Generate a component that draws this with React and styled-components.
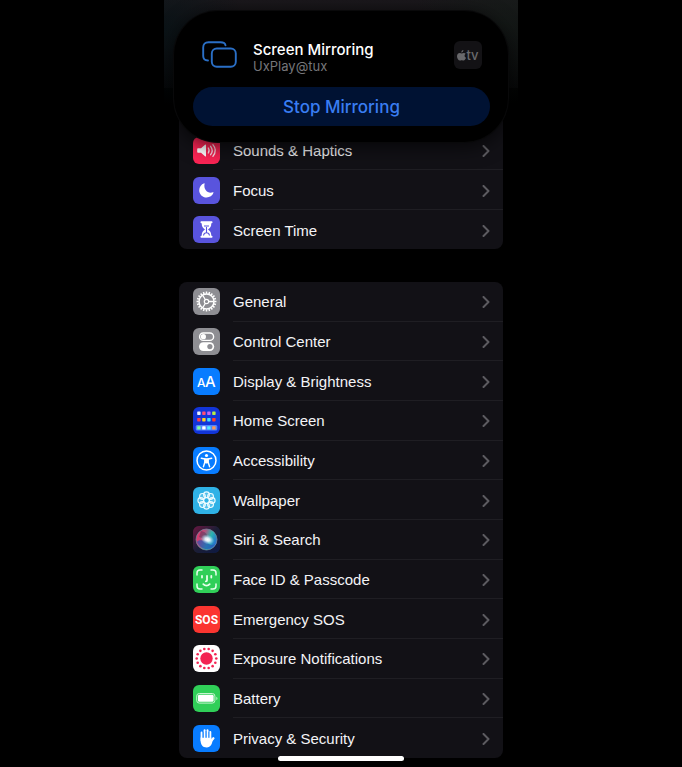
import React from "react";
import styled, { createGlobalStyle } from "styled-components";

const GlobalStyle = createGlobalStyle`
  * { box-sizing: border-box; }
  body {
    margin: 0;
    background: #000;
    color: #f4f4f6;
    font-family: Inter, "Liberation Sans", sans-serif;
  }
`;

const Phone = styled.main`
  position: relative;
  display: flex;
  flex-direction: column;
  gap: 33px;
  width: 100%;
  max-width: 354px;
  min-height: 100vh;
  margin: 0 auto;
  padding: 103px 15px 9px;
  background:
    radial-gradient(circle at 0 30px, rgba(8, 20, 24, 0.7), transparent 80px),
    radial-gradient(circle at 340px 20px, rgba(20, 28, 23, 0.6), transparent 90px),
    linear-gradient(#1b181c, #111013 30px, #050506 88px, #000 88px);
`;

const Group = styled.ul`
  display: grid;
  grid-auto-rows: ${(p) => (p.$fill ? "minmax(39px, 1fr)" : "auto")};
  flex: ${(p) => (p.$fill ? "1" : "none")};
  margin: 0;
  padding: ${(p) => (p.$tucked ? "27px 0 0" : "0")};
  list-style: none;
  background: #121116;
  border-radius: 8px;
  overflow: hidden;
`;

const Item = styled.li`
  display: grid;
  min-height: ${(p) => (p.$tall ? "40px" : "39px")};

  &:last-child { min-height: 39px; }
`;

const RowLink = styled.a`
  display: flex;
  align-items: stretch;
  gap: 13px;
  padding-left: 14px;
  color: inherit;
  text-decoration: none;
`;

const Tile = styled.span`
  align-self: center;
  flex: none;
  width: 27px;
  height: 27px;
  border-radius: 6px;
  overflow: hidden;
  background: ${(p) => p.$color};

  svg { display: block; }
`;

const RowBody = styled.span`
  display: flex;
  flex: 1;
  align-items: center;
  justify-content: space-between;
  padding-top: 2px;
  padding-right: 13px;
  font-family: "Liberation Sans", Arial, sans-serif;
  font-size: 15px;
  line-height: 20px;
  border-bottom: ${(p) => (p.$last ? "none" : "1px solid #1f1e23")};
`;

const Sheet = styled.section`
  position: absolute;
  top: 11px;
  left: 10px;
  right: 10px;
  padding: 25px 18px 16px 19px;
  background: #000;
  border-radius: 44px;
  box-shadow: 0 0 0 1px #09090a, 0 4px 20px rgba(0, 0, 0, 0.7);
`;

const SheetHeader = styled.header`
  display: flex;
  align-items: center;
  height: 38px;
  padding: 0 8px 0 9px;
  margin-bottom: 13px;
`;

const SheetTitles = styled.div`
  flex: 1;
  margin-left: 16px;
  padding-top: 5px;
`;

const Title = styled.h1`
  margin: 0;
  font-size: 15px;
  font-weight: 500;
  line-height: 17px;
  color: #fff;
`;

const Subtitle = styled.p`
  margin: 0;
  font-size: 13px;
  line-height: 16px;
  color: #76767a;
`;

const TvBadge = styled.span`
  display: flex;
  align-items: center;
  justify-content: center;
  width: 28px;
  height: 28px;
  border-radius: 6px;
  background: #131215;
  color: #69696c;
  font-size: 13px;
  font-weight: 500;
`;

const StopButton = styled.button`
  display: block;
  width: 100%;
  height: 39px;
  padding: 0;
  border: 0;
  border-radius: 20px;
  background: #001233;
  color: #397df2;
  font-family: inherit;
  font-size: 17px;
  font-weight: 500;
`;

const HomeIndicator = styled.div`
  position: absolute;
  bottom: 6px;
  left: 50%;
  width: 126px;
  height: 5px;
  margin-left: -63px;
  border-radius: 3px;
  background: #fff;
`;

const Icon = ({ children }) => (
  <svg width="27" height="27" viewBox="0 0 27 27" fill="none" aria-hidden="true">
    {children}
  </svg>
);

const ring = (count, radius, cx = 13.5, cy = 13.5) =>
  Array.from({ length: count }, (_, i) => {
    const a = (i * 2 * Math.PI) / count;
    return [cx + radius * Math.cos(a), cy + radius * Math.sin(a)];
  });

const SoundsIcon = () => (
  <Icon>
    <path d="M5 11.2h3l4-3.5c.5-.4 1-.2 1 .4v10.8c0 .6-.5.8-1 .4l-4-3.5H5c-.5 0-.8-.3-.8-.8v-3c0-.5.3-.8.8-.8z" fill="#fff" />
    <path d="M15.3 11c1 1.5 1 3.500 0 5M17.600 9.300c2 2.600 2 5.800 0 8.400M19.900 7.700c3 3.600 3 8 0 11.600" stroke="#ffdce4" strokeWidth="1.300" strokeLinecap="round" />
  </Icon>
);

const FocusIcon = () => (
  <Icon>
    <path d="M11.200 6.200c-3 1-5 3.800-5 7 0 4.100 3.300 7.300 7.400 7.300 3.100 0 5.800-1.900 6.900-4.700.2-.5-.1-.7-.6-.5-4.900 1.700-9.700-2.500-8.300-8.500.1-.5-.1-.7-.4-.6z" fill="#fff" />
  </Icon>
);

const ScreenTimeIcon = () => (
  <Icon>
    <path d="M8.500 5.200h10c.6 0 1 .4 1 1s-.4 1-1 1h-.2c0 3.300-1 4.700-3.300 6.300 2.300 1.600 3.300 3 3.300 6.300h.2c.6 0 1 .4 1 1s-.4 1-1 1h-10c-.6 0-1-.4-1-1s.4-1 1-1h.2c0-3.300 1-4.700 3.300-6.300-2.300-1.600-3.300-3-3.300-6.300h-.2c-.6 0-1-.4-1-1s.4-1 1-1z" fill="#fff" />
    <path d="M11 10h5M13.500 11v6M10.500 19.500c.3-1.800 1.500-2.800 3-2.800s2.700 1 3 2.800" stroke="#5954dd" strokeWidth="1.100" />
  </Icon>
);

const GeneralIcon = () => (
  <Icon>
    {ring(20, 9.2).map(([x, y], i) => (
      <line key={i} x1={13.5 + (x - 13.5) * 0.84} y1={13.5 + (y - 13.5) * 0.84} x2={13.5 + (x - 13.5) * 1.08} y2={13.5 + (y - 13.5) * 1.08} stroke="#fff" strokeWidth="1.500" />
    ))}
    <circle cx="13.500" cy="13.500" r="7.500" stroke="#fff" strokeWidth="1.500" />
    <path d="M13.500 13.500h7M13.500 13.500l-3.700-6M13.500 13.500l-3.700 6" stroke="#fff" strokeWidth="1.300" />
    <circle cx="13.500" cy="13.500" r="2.200" fill="#8e8e93" stroke="#fff" strokeWidth="1.200" />
  </Icon>
);

const ControlIcon = () => (
  <Icon>
    <rect x="6.600" y="5" width="14" height="7.400" rx="3.700" stroke="#fff" strokeWidth="1.400" />
    <circle cx="10.400" cy="8.700" r="2.600" fill="#fff" />
    <rect x="6" y="14.300" width="15.200" height="8.600" rx="4.300" fill="#fff" />
    <circle cx="16.900" cy="18.600" r="2.600" fill="#8e8e93" />
  </Icon>
);

const DisplayIcon = () => (
  <Icon>
    <text x="4" y="19" fill="#fff" fontFamily="Inter, sans-serif" fontSize="12" fontWeight="500">A</text>
    <text x="12" y="19" fill="#fff" fontFamily="Inter, sans-serif" fontSize="15" fontWeight="500">A</text>
  </Icon>
);

const HOME_COLORS = [
  ["#e8f0ff", "#ff4d74", "#c267f5", "#b5ee45"],
  ["#ff3b4e", "#ffd21e", "#43dfff", "#ff3e2d"],
  ["#7dff9a", "#ffffff", "#52ecff", "#ff9855"],
];

const HomeIcon = () => (
  <Icon>
    <rect x="2.700" y="18" width="21.600" height="5.600" rx="1.500" fill="#5385ff" />
    {HOME_COLORS.map((line, r) =>
      line.map((c, i) => (
        <rect key={`${r}-${i}`} x={4.2 + i * 5} y={[4.5, 11, 19.2][r]} width="3.400" height="3.400" rx=".6" fill={c} />
      ))
    )}
  </Icon>
);

const AccessibilityIcon = () => (
  <Icon>
    <circle cx="13.500" cy="13.500" r="9.500" stroke="#fff" strokeWidth="1.500" />
    <circle cx="13.500" cy="8.500" r="1.600" fill="#fff" />
    <path d="M8.300 11.300l3.600.7v3l-1.500 4.700M18.700 11.300l-3.600.7v3l1.500 4.700" stroke="#fff" strokeWidth="1.400" strokeLinecap="round" strokeLinejoin="round" />
    <path d="M11.300 11.300h4.400v4.300l-1.400.8h-1.600l-1.400-.8z" fill="#fff" />
  </Icon>
);

const WallpaperIcon = () => (
  <Icon>
    {ring(8, 5.7).map(([x, y], i) => (
      <circle key={i} cx={x} cy={y} r="2.900" stroke="#eefcff" strokeWidth="1.100" fill="#ffffff2b" />
    ))}
    <circle cx="13.500" cy="13.500" r="3" stroke="#eefcff" strokeWidth="1.200" />
  </Icon>
);

const SiriIcon = () => (
  <Icon>
    <defs>
      <linearGradient id="siri-back" x1="0" y1="0" x2="1" y2="1">
        <stop offset="0" stopColor="#6a1740" />
        <stop offset=".5" stopColor="#1c1e36" />
        <stop offset="1" stopColor="#0c1944" />
      </linearGradient>
      <linearGradient id="siri-orb" x1="0" y1=".2" x2="1" y2=".6">
        <stop offset="0" stopColor="#f02a65" />
        <stop offset=".35" stopColor="#b1547e" />
        <stop offset=".65" stopColor="#2ab5ae" />
        <stop offset="1" stopColor="#256ad1" />
      </linearGradient>
      <radialGradient id="siri-glow">
        <stop offset="0" stopColor="#fff" />
        <stop offset=".35" stopColor="#f1f7ff" stopOpacity=".9" />
        <stop offset="1" stopColor="#aaddff" stopOpacity="0" />
      </radialGradient>
    </defs>
    <rect width="27" height="27" fill="url(#siri-back)" />
    <circle cx="13.500" cy="13.500" r="10.500" fill="url(#siri-orb)" stroke="#7790a4" strokeWidth=".7" />
    <path d="M4 16c4-4 7 1 10-2 1 5 4 6 8 4-4 7-14 7-18-2z" fill="#2752b5" opacity=".65" />
    <path d="M8 5c6 1 7 5 6 9l-8-3z" fill="#222b49" opacity=".35" />
    <ellipse cx="14.500" cy="13.500" rx="7" ry="4.800" transform="rotate(20 14.500 13.500)" fill="url(#siri-glow)" />
  </Icon>
);

const FaceIcon = () => (
  <Icon>
    <g stroke="#e8ffed" strokeWidth="1.500" strokeLinecap="round">
      <path d="M4 9V7c0-2 1-3 3-3h2M18 4h2c2 0 3 1 3 3v2M23 18v2c0 2-1 3-3 3h-2M9 23H7c-2 0-3-1-3-3v-2" />
      <path d="M9 9.800v1.700M18.300 9.800v1.700M14 9.800v4.500c0 .7-.4 1-1.200 1M10.300 18.200c1.800 1.700 4.600 1.700 6.400 0" strokeWidth="1.800" />
    </g>
  </Icon>
);

const SosIcon = () => (
  <Icon>
    <text x="13.500" y="18" textAnchor="middle" fill="#fff" fontFamily="Roboto, sans-serif" fontSize="12" fontWeight="700">SOS</text>
  </Icon>
);

const ExposureIcon = () => (
  <Icon>
    <circle cx="13.500" cy="13.500" r="6.200" fill="#f32453" />
    {ring(14, 9.8).map(([x, y], i) => (
      <circle key={i} cx={x} cy={y} r="1.300" fill="#f32453" />
    ))}
  </Icon>
);

const BatteryIcon = () => (
  <Icon>
    <rect x="3.700" y="8.500" width="18.200" height="9.600" rx="2.600" stroke="#c5f4d0" strokeWidth="1" />
    <rect x="5" y="9.800" width="15.600" height="7" rx="1.400" fill="#fff" />
    <path d="M23.400 11.700c1.400.5 1.400 2.800 0 3.300z" fill="#c5f4d0" />
  </Icon>
);

const PrivacyIcon = () => (
  <Icon>
    <g stroke="#fff" strokeWidth="2" strokeLinecap="round">
      <path d="M8.600 7.500v8M11.600 5.200v9M14.500 5.200v9M17.300 7v9" />
      <path d="M17 17.300l3.400-4" strokeWidth="2.300" />
    </g>
    <path d="M7.600 12.500h10.700v2.300l1.300-.5c0 4.300-2 8.200-5.900 8.200-4.100 0-6.100-2.800-6.100-7z" fill="#fff" />
    <path d="M10.100 7v6M13.050 6v7M15.900 7v6" stroke="#087cff" strokeWidth=".7" />
  </Icon>
);

const Chevron = () => (
  <svg width="8" height="12" viewBox="0 0 8 12" fill="none" aria-hidden="true">
    <path d="M1.500 1l5 5-5 5" stroke="#5c5b60" strokeWidth="2" strokeLinecap="round" strokeLinejoin="round" />
  </svg>
);

const MirrorIcon = () => (
  <svg width="35" height="28" viewBox="0 0 35 28" fill="none" stroke="#2a6fc6" strokeWidth="1.900" strokeLinecap="round" aria-hidden="true">
    <path d="M6 19.500C3 19.500 1.200 18 1.200 15V6.500c0-3.500 1.800-5.200 5.300-5.200h12c3 0 4.700 1 5 3" />
    <rect x="9.800" y="7.500" width="24" height="18.200" rx="5" />
  </svg>
);

const AppleLogo = () => (
  <svg width="9" height="11" viewBox="0 0 18 22" fill="currentColor" aria-hidden="true">
    <path d="M12.800 0c.2 2.700-1.800 5-4.200 5.100C8.300 2.600 10.500.3 12.800 0zM17.300 7.400c-3.300 2-2.700 6.800.7 8.100-.8 2.400-2.700 5.700-4.800 5.700-1.400 0-2-.9-3.700-.9s-2.300.9-3.600.9C2.900 21.200 0 16.500 0 12.500c0-4.200 2.700-6.600 5.500-6.600 1.700 0 2.900 1 4 1 1 0 2.400-1.100 4.300-1.100 1.300 0 2.700.5 3.500 1.600z" />
  </svg>
);

const FIRST = [
  { label: "Sounds & Haptics", color: "#fb2454", icon: <SoundsIcon /> },
  { label: "Focus", color: "#5954dd", icon: <FocusIcon /> },
  { label: "Screen Time", color: "#5954dd", icon: <ScreenTimeIcon /> },
];

const SECOND = [
  { label: "General", color: "#8e8e93", icon: <GeneralIcon /> },
  { label: "Control Center", color: "#8e8e93", icon: <ControlIcon /> },
  { label: "Display & Brightness", color: "#087cff", icon: <DisplayIcon /> },
  { label: "Home Screen", color: "#1235d8", icon: <HomeIcon /> },
  { label: "Accessibility", color: "#087cff", icon: <AccessibilityIcon /> },
  { label: "Wallpaper", color: "#2fb2e6", icon: <WallpaperIcon /> },
  { label: "Siri & Search", color: "#1c1e36", icon: <SiriIcon /> },
  { label: "Face ID & Passcode", color: "#30cf58", icon: <FaceIcon /> },
  { label: "Emergency SOS", color: "#fb3530", icon: <SosIcon /> },
  { label: "Exposure Notifications", color: "#fff", icon: <ExposureIcon /> },
  { label: "Battery", color: "#30cf58", icon: <BatteryIcon /> },
  { label: "Privacy & Security", color: "#087cff", icon: <PrivacyIcon /> },
];

const SettingsGroup = ({ items, tucked, fill }) => (
  <Group $tucked={tucked} $fill={fill}>
    {items.map(({ label, color, icon }, i) => (
      <Item key={label} $tall={tucked}>
        <RowLink href="#">
          <Tile $color={color}>{icon}</Tile>
          <RowBody $last={i === items.length - 1}>
            {label}
            <Chevron />
          </RowBody>
        </RowLink>
      </Item>
    ))}
  </Group>
);

export default function App() {
  return (
    <>
      <GlobalStyle />
      <Phone>
        <SettingsGroup items={FIRST} tucked />
        <SettingsGroup items={SECOND} fill />
        <Sheet>
          <SheetHeader>
            <MirrorIcon />
            <SheetTitles>
              <Title>Screen Mirroring</Title>
              <Subtitle>UxPlay@tux</Subtitle>
            </SheetTitles>
            <TvBadge>
              <AppleLogo />
              tv
            </TvBadge>
          </SheetHeader>
          <StopButton type="button">Stop Mirroring</StopButton>
        </Sheet>
        <HomeIndicator />
      </Phone>
    </>
  );
}
